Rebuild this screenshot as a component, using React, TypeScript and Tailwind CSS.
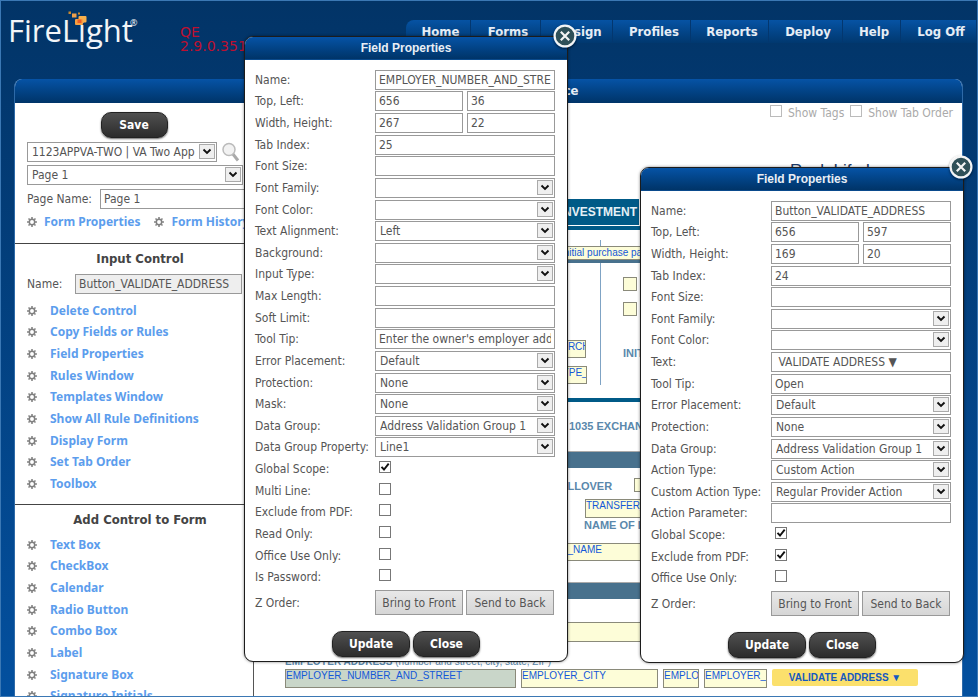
import type { ReactNode } from "react";

type Row = {
  label: string;
  kind: "text" | "pair" | "select" | "check";
  value?: string;
  second?: string;
  checked?: boolean;
};

const employerRows: Row[] = [
  { label: "Name:", kind: "text", value: "EMPLOYER_NUMBER_AND_STREET" },
  { label: "Top, Left:", kind: "pair", value: "656", second: "36" },
  { label: "Width, Height:", kind: "pair", value: "267", second: "22" },
  { label: "Tab Index:", kind: "text", value: "25" },
  { label: "Font Size:", kind: "text" },
  { label: "Font Family:", kind: "select" },
  { label: "Font Color:", kind: "select" },
  { label: "Text Alignment:", kind: "select", value: "Left" },
  { label: "Background:", kind: "select" },
  { label: "Input Type:", kind: "select" },
  { label: "Max Length:", kind: "text" },
  { label: "Soft Limit:", kind: "text" },
  { label: "Tool Tip:", kind: "text", value: "Enter the owner's employer address" },
  { label: "Error Placement:", kind: "select", value: "Default" },
  { label: "Protection:", kind: "select", value: "None" },
  { label: "Mask:", kind: "select", value: "None" },
  { label: "Data Group:", kind: "select", value: "Address Validation Group 1" },
  { label: "Data Group Property:", kind: "select", value: "Line1" },
  { label: "Global Scope:", kind: "check", checked: true },
  { label: "Multi Line:", kind: "check" },
  { label: "Exclude from PDF:", kind: "check" },
  { label: "Read Only:", kind: "check" },
  { label: "Office Use Only:", kind: "check" },
  { label: "Is Password:", kind: "check" },
];

const buttonRows: Row[] = [
  { label: "Name:", kind: "text", value: "Button_VALIDATE_ADDRESS" },
  { label: "Top, Left:", kind: "pair", value: "656", second: "597" },
  { label: "Width, Height:", kind: "pair", value: "169", second: "20" },
  { label: "Tab Index:", kind: "text", value: "24" },
  { label: "Font Size:", kind: "text" },
  { label: "Font Family:", kind: "select" },
  { label: "Font Color:", kind: "select" },
  { label: "Text:", kind: "text", value: " VALIDATE ADDRESS ▼" },
  { label: "Tool Tip:", kind: "text", value: "Open" },
  { label: "Error Placement:", kind: "select", value: "Default" },
  { label: "Protection:", kind: "select", value: "None" },
  { label: "Data Group:", kind: "select", value: "Address Validation Group 1" },
  { label: "Action Type:", kind: "select", value: "Custom Action" },
  { label: "Custom Action Type:", kind: "select", value: "Regular Provider Action" },
  { label: "Action Parameter:", kind: "text" },
  { label: "Global Scope:", kind: "check", checked: true },
  { label: "Exclude from PDF:", kind: "check", checked: true },
  { label: "Office Use Only:", kind: "check" },
];

const controlLinks = [
  "Delete Control",
  "Copy Fields or Rules",
  "Field Properties",
  "Rules Window",
  "Templates Window",
  "Show All Rule Definitions",
  "Display Form",
  "Set Tab Order",
  "Toolbox",
];

const addLinks = [
  "Text Box",
  "CheckBox",
  "Calendar",
  "Radio Button",
  "Combo Box",
  "Label",
  "Signature Box",
  "Signature Initials",
];

const inputBase = "h-5 w-full min-w-0 border border-[#999] bg-white px-[3px] text-xs text-[#555] outline-none";
const linkBase = "font-['Noto_Sans','DejaVu_Sans',sans-serif] text-xs font-bold whitespace-nowrap text-[#5c9ded]";
const headingBase = "text-center text-[13px] leading-4 font-bold text-[#444]";

function Gear() {
  return (
    <svg viewBox="0 0 10 10" className="size-[10px] shrink-0" aria-hidden="true">
      <g stroke="#858585" strokeWidth="1.6">
        <path d="M5 0v2M5 8v2M0 5h2M8 5h2M1.5 1.5l1.3 1.3M7.2 7.2l1.3 1.3M8.5 1.5L7.2 2.8M2.8 7.2L1.5 8.5" />
      </g>
      <circle cx="5" cy="5" r="2.7" fill="#fff" stroke="#808080" strokeWidth="1.5" />
    </svg>
  );
}

function SelectBox({ id, value = "", label }: { id: string; value?: string; label?: string }) {
  return (
    <div className="relative w-full">
      <select
        id={id}
        aria-label={label}
        defaultValue={value}
        className="block h-5 w-full appearance-none border border-[#999] bg-white pr-5 pl-1 text-xs text-[#555] outline-none"
      >
        <option value={value}>{value}</option>
      </select>
      <svg
        viewBox="0 0 16 15"
        className="pointer-events-none absolute top-[2px] right-[2px] h-[15px] w-4"
        aria-hidden="true"
      >
        <rect x="0.5" y="0.5" width="15" height="14" fill="#efefef" stroke="#aaa" />
        <path d="M4.5 5.5L8 9L11.5 5.5" fill="none" stroke="#111" strokeWidth="1.9" />
      </svg>
    </div>
  );
}

function CheckBox({ id, checked, muted }: { id: string; checked?: boolean; muted?: boolean }) {
  return (
    <span className="relative flex size-3 shrink-0">
      <input
        id={id}
        type="checkbox"
        defaultChecked={checked}
        className={
          muted
            ? "peer size-3 appearance-none border border-[#bbb] bg-white"
            : "peer size-3 appearance-none border border-[#777] bg-white"
        }
      />
      <svg
        viewBox="0 0 12 12"
        className="pointer-events-none absolute inset-0 hidden size-3 peer-checked:block"
        aria-hidden="true"
      >
        <path d="M2.5 5.8L5 8.5L9.7 2.6" fill="none" stroke="#111" strokeWidth="1.9" />
      </svg>
    </span>
  );
}

function DarkButton({ children, wide }: { children: ReactNode; wide?: boolean }) {
  return (
    <button
      type="button"
      className={
        (wide ? "w-[78px]" : "w-[67px]") +
        " h-[26px] rounded-[10px] border border-[#222] bg-linear-to-b from-[#505050] to-[#2c2c2c] text-xs font-bold text-white shadow-[0_1px_2px_rgba(0,0,0,0.6)]"
      }
    >
      {children}
    </button>
  );
}

function GreyButton({ children }: { children: ReactNode }) {
  return (
    <button
      type="button"
      className="h-[25px] w-[88px] border border-[#999] bg-linear-to-b from-[#e8e8e8] to-[#d6d6d6] text-xs whitespace-nowrap text-[#555]"
    >
      {children}
    </button>
  );
}

function Control({ row, id }: { row: Row; id: string }) {
  if (row.kind === "select") return <SelectBox id={id} value={row.value} />;
  if (row.kind === "check")
    return (
      <span className="mb-1 ml-1">
        <CheckBox id={id} checked={row.checked} />
      </span>
    );
  if (row.kind === "pair")
    return (
      <div className="flex w-full gap-1">
        <input id={id} defaultValue={row.value} className={inputBase} />
        <input aria-label={row.label} defaultValue={row.second} className={inputBase} />
      </div>
    );
  return <input id={id} defaultValue={row.value} className={inputBase} />;
}

function Dialog({
  name,
  rows,
  place,
  gridHeight,
}: {
  name: string;
  rows: Row[];
  place: string;
  gridHeight: string;
}) {
  return (
    <section
      className={
        place +
        " absolute w-[324px] rounded-[9px] border border-[#1c1c1c] bg-white shadow-[0_0_3px_rgba(0,0,0,0.5)]"
      }
    >
      <h2 className="h-[23px] rounded-t-lg border-b border-[#0a4a8c] bg-linear-to-b from-[#0653a6] to-[#003468] text-center font-['Liberation_Sans',Arial,sans-serif] text-xs leading-[22px] font-bold text-[#e8eef5]">
        Field Properties
      </h2>
      <button
        type="button"
        aria-label="Close window"
        className="absolute -top-[13px] -right-[10px] size-6 rounded-full shadow-[0_1px_2px_rgba(0,0,0,0.5)]"
      >
        <svg viewBox="0 0 24 24" className="size-6" aria-hidden="true">
          <circle cx="12" cy="12" r="10.4" fill="#2f5058" stroke="#f4f4f4" strokeWidth="2.2" />
          <path d="M7.8 7.8l8.4 8.4M16.2 7.8l-8.4 8.4" stroke="#f4f4f4" strokeWidth="2.2" />
        </svg>
      </button>
      <div className="pt-[9px] pr-3 pb-1 pl-[10px]">
        <div className={gridHeight + " grid auto-rows-fr"}>
          {rows.map((row) => (
            <div key={row.label} className="grid min-h-0 grid-cols-[120px_1fr] items-center">
              <label htmlFor={name + row.label} className="whitespace-nowrap">
                {row.label}
              </label>
              <Control row={row} id={name + row.label} />
            </div>
          ))}
        </div>
        <div className="mt-[2px] grid grid-cols-[120px_1fr] items-center">
          <span>Z Order:</span>
          <div className="flex gap-[3px]">
            <GreyButton>Bring to Front</GreyButton>
            <GreyButton>Send to Back</GreyButton>
          </div>
        </div>
        <div className="mt-4 flex justify-center gap-[3px] pl-[2px]">
          <DarkButton wide>Update</DarkButton>
          <DarkButton>Close</DarkButton>
        </div>
      </div>
    </section>
  );
}

function LinkRow({ text }: { text: string }) {
  return (
    <li className="flex items-center gap-[13px]">
      <Gear />
      <a href="#" className={linkBase}>
        {text}
      </a>
    </li>
  );
}

function Sidebar() {
  return (
    <aside className="w-[238px] shrink-0 overflow-hidden">
      <div className="flex justify-center pt-[9px]">
        <DarkButton>Save</DarkButton>
      </div>
      <div className="mt-1 border-b border-[#444] pb-[13px] pl-3">
        <div className="flex items-center gap-[5px]">
          <div className="w-[190px]">
            <SelectBox id="form" label="Form" value="1123APPVA-TWO | VA Two App" />
          </div>
          <svg viewBox="0 0 18 20" className="h-5 w-[18px]" aria-hidden="true">
            <path d="M10.5 11.5L16 18.5" stroke="#aaa" strokeWidth="3" />
            <circle cx="7" cy="7.5" r="6" fill="#f2f2f2" stroke="#bbb" strokeWidth="1.5" />
          </svg>
        </div>
        <div className="mt-[3px] w-[216px]">
          <SelectBox id="page" label="Page" value="Page 1" />
        </div>
        <div className="mt-1 flex items-center">
          <label htmlFor="page-name" className="w-[73px] shrink-0">
            Page Name:
          </label>
          <input id="page-name" defaultValue="Page 1" className={inputBase} />
        </div>
        <ul className="mt-[5px] flex gap-[14px]">
          {["Form Properties", "Form History"].map((text) => (
            <li key={text} className="flex items-center gap-[7px]">
              <Gear />
              <a href="#" className={linkBase}>
                {text}
              </a>
            </li>
          ))}
        </ul>
      </div>
      <div className="border-b border-[#444] pt-[7px] pb-[9px] pl-3">
        <h3 className={headingBase}>Input Control</h3>
        <div className="mt-[7px] mb-[6px] flex items-center pr-[11px]">
          <label htmlFor="control-name" className="w-12 shrink-0">
            Name:
          </label>
          <input
            id="control-name"
            readOnly
            defaultValue="Button_VALIDATE_ADDRESS"
            className="h-5 w-full min-w-0 border border-[#999] bg-[#eee] px-[3px] text-xs text-[#555] outline-none"
          />
        </div>
        <ul className="grid h-[195px] auto-rows-fr">
          {controlLinks.map((text) => (
            <LinkRow key={text} text={text} />
          ))}
        </ul>
      </div>
      <div className="pt-[7px] pl-3">
        <h3 className={headingBase}>Add Control to Form</h3>
        <ul className="mt-[6px] grid h-[173px] auto-rows-fr">
          {addLinks.map((text) => (
            <LinkRow key={text} text={text} />
          ))}
        </ul>
      </div>
    </aside>
  );
}

function Field({ place, children }: { place: string; children?: ReactNode }) {
  return (
    <div
      className={
        place +
        " absolute overflow-hidden border border-[#8a8a7a] text-[10px] leading-[11px] whitespace-nowrap text-[#1458d8]"
      }
    >
      {children}
    </div>
  );
}

/* Form page under the property windows: fields sit freely on the canvas. */
function FormCanvas() {
  return (
    <div className="relative min-w-0 flex-1 overflow-hidden font-['Liberation_Sans',Arial,sans-serif]">
      <div className="flex justify-end gap-[6px] pt-[2px] pr-[9px] font-['DejaVu_Sans_Condensed','DejaVu_Sans',sans-serif] text-[#aaa]">
        <CheckBox id="show-tags" muted />
        <label htmlFor="show-tags">Show Tags</label>
        <CheckBox id="show-order" muted />
        <label htmlFor="show-order">Show Tab Order</label>
      </div>
      <div className="absolute top-[60px] left-[537px] text-[17px] leading-4 text-[#1d3a66]">Rock Life Insurance</div>
      <div className="absolute top-[96px] left-0 h-[26px] w-[386px] bg-[#005a87] pr-[2px] text-right text-xs leading-[26px] font-bold text-[#e4f0f6]">
        INVESTMENT
      </div>
      <div className="absolute top-[123px] left-0 h-[4px] w-[500px] bg-[#005a87]" />
      <div className="absolute top-[137px] left-[347px] h-[145px] w-px bg-[#7fa3c4]" />
      <div className="absolute top-[143px] left-0 h-[17px] w-[500px] bg-[#48718d]" />
      <Field place="top-[143px] left-[200px] h-[14px] w-[300px] bg-[#fdfdd8] pl-[107px]">Initial purchase payment</Field>
      <Field place="top-[174px] left-[370px] size-[14px] bg-[#fdfdd8]" />
      <Field place="top-[199px] left-[370px] size-[14px] bg-[#fdfdd8]" />
      <Field place="top-[237px] left-[275px] h-[18px] w-[58px] bg-[#fdfdd8] pl-[25px]">PURCH</Field>
      <Field place="top-[263px] left-[275px] h-[18px] w-[59px] bg-[#fdfdd8] pl-[27px]">TYPE_</Field>
      <div className="absolute top-[244px] left-[370px] text-[11px] leading-[12px] font-bold text-[#5a88ac]">INITIAL</div>
      <div className="absolute top-[295px] left-0 h-[4px] w-[500px] bg-[#005a87]" />
      <div className="absolute top-[317px] left-[316px] text-[11px] leading-[12px] font-bold whitespace-nowrap text-[#5a88ac]">
        1035 EXCHANGE
      </div>
      <div className="absolute top-[348px] left-0 h-[17px] w-[500px] border-t border-[#aaa] bg-[#48718d]" />
      <div className="absolute top-[377px] left-[298px] text-[11px] leading-[12px] font-bold text-[#5a88ac]">ROLLOVER</div>
      <Field place="top-[375px] left-[381px] h-[14px] w-[20px] bg-[#fdfdd8]" />
      <Field place="top-[396px] left-[332px] h-[19px] w-[100px] bg-[#fdfdd8]">TRANSFER_NAME</Field>
      <div className="absolute top-[416px] left-[331px] text-[11px] leading-[12px] font-bold whitespace-nowrap text-[#5a88ac]">
        NAME OF DELIVERING
      </div>
      <Field place="top-[440px] left-[270px] h-[18px] w-[150px] bg-[#fdfdd8] pl-[19px]">FULL_NAME</Field>
      <div className="absolute top-[479px] left-0 h-[17px] w-[500px] border-t border-[#aaa] bg-[#48718d]" />
      <Field place="top-[519px] left-[33px] h-[20px] w-[400px] bg-[#fdfdd8]" />
      <div className="absolute top-[553px] left-0 h-[60px] w-px bg-[#555]" />
      <div className="absolute top-[553px] left-[32px] text-[10px] leading-[12px] whitespace-nowrap text-[#5a88ac]">
        <b>EMPLOYER ADDRESS</b> (number and street, city, state, ZIP)
      </div>
      <Field place="top-[566px] left-[32px] h-[19px] w-[231px] bg-[#c9d6c9]">EMPLOYER_NUMBER_AND_STREET</Field>
      <Field place="top-[566px] left-[268px] h-[19px] w-[137px] bg-[#fdfdd8]">EMPLOYER_CITY</Field>
      <Field place="top-[566px] left-[410px] h-[19px] w-[36px] bg-[#fdfdd8]">EMPLOYER_STATE</Field>
      <Field place="top-[566px] left-[451px] h-[19px] w-[63px] bg-[#fdfdd8]">EMPLOYER_ZIP</Field>
      <button
        type="button"
        className="absolute top-[566px] left-[519px] h-[17px] w-[146px] rounded-xs bg-[#fbe06c] text-[10px] leading-[15px] font-bold whitespace-nowrap text-[#1458c0]"
      >
        VALIDATE ADDRESS ▼
      </button>
    </div>
  );
}

const nav = [
  { text: "Home", width: "w-[65px]" },
  { text: "Forms", width: "w-[70px]" },
  { text: "Design", width: "w-[72px]" },
  { text: "Profiles", width: "w-[78px]" },
  { text: "Reports", width: "w-[78px]" },
  { text: "Deploy", width: "w-[74px]" },
  { text: "Help", width: "w-[58px]" },
  { text: "Log Off", width: "w-[76px]" },
];

export default function App() {
  return (
    <div className="relative flex h-screen flex-col overflow-hidden border border-[#3b78b4] bg-linear-to-b from-[#023467] to-[#03509f] font-['DejaVu_Sans_Condensed','DejaVu_Sans',sans-serif] text-xs leading-4 text-[#555]">
      <header className="flex h-[78px] shrink-0 items-start pl-[7px]">
        <div className="relative mt-[7px] w-[130px] font-['Open_Sans',sans-serif] text-[31px] leading-[44px] text-[#f2f5f8]">
          FireLight
          <sup className="absolute top-[10px] left-[122px] text-[9px] leading-[10px]">®</sup>
          <svg viewBox="0 0 20 14" className="absolute top-[3px] left-[60px] h-[14px] w-5" aria-hidden="true">
            <rect x="0.5" y="0.5" width="2.5" height="2.5" fill="#c9892f" />
            <rect x="4" y="2.5" width="4.5" height="4" fill="#f0a04a" />
            <rect x="10" y="1.5" width="2" height="2" fill="#c9892f" />
            <rect x="10.5" y="5" width="8" height="6.5" rx="1" fill="#f7b04c" />
            <rect x="7" y="8" width="8" height="6" rx="1" fill="#f7a040" />
            <rect x="9.5" y="8.5" width="4" height="3.5" fill="#ee5a24" />
          </svg>
        </div>
        <p className="mt-[24px] ml-[42px] w-[80px] font-['DejaVu_Sans',sans-serif] text-sm leading-[14px] text-[#bd1030]">
          QE 2.9.0.351
        </p>
        <nav className="mt-[19px] ml-auto flex h-[23px] overflow-hidden rounded-tl-lg">
          {nav.map((item) => (
            <a
              key={item.text}
              href="#"
              className={
                item.width +
                " border-r border-[#03376f] bg-linear-to-b from-[#0653a4] to-[#01386f] pl-[5px] text-center text-[13px] leading-[23px] font-bold whitespace-nowrap text-[#e6edf5]"
              }
            >
              {item.text}
            </a>
          ))}
        </nav>
      </header>
      <main className="mr-[14px] ml-[13px] flex min-h-0 flex-1 flex-col overflow-hidden rounded-t-lg border-x border-[#2e6aa8] bg-white">
        <h1 className="h-6 shrink-0 bg-linear-to-b from-[#0653a6] to-[#003468] text-center text-[13px] leading-6 font-bold text-[#e6edf5]">
          FireLight Forms Workspace
        </h1>
        <div className="flex min-h-0 flex-1">
          <Sidebar />
          <FormCanvas />
        </div>
      </main>
      <Dialog name="employer-" rows={employerRows} place="top-[35px] left-[243px]" gridHeight="h-[519px]" />
      <Dialog name="button-" rows={buttonRows} place="top-[166px] left-[639px]" gridHeight="h-[389px]" />
    </div>
  );
}
